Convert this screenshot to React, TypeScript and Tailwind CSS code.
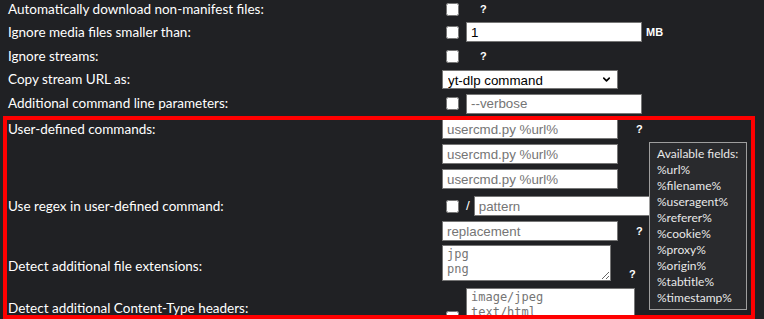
import { ChevronDown } from 'lucide-react'

const input =
  "h-[20px] w-[176px] border border-[#767676] bg-white px-[4px] font-['Liberation_Sans',Arial,sans-serif] text-[13.33px] text-black outline-none placeholder:text-[#757575]"
const area =
  "h-[36px] w-[169px] resize border border-[#767676] bg-white px-[4px] py-[1px] font-['DejaVu_Sans_Mono',monospace] text-[12px] leading-[15px] text-black outline-none placeholder:text-[#757575]"
const check = 'm-0 h-[13px] w-[13px] shrink-0'

function Help({ className = '' }: { className?: string }) {
  return (
    <span className={"font-['Liberation_Sans',Arial,sans-serif] text-[11px] leading-none font-bold text-white " + className}>
      ?
    </span>
  )
}

const fields = [
  'Available fields:',
  '%url%',
  '%filename%',
  '%useragent%',
  '%referer%',
  '%cookie%',
  '%proxy%',
  '%origin%',
  '%tabtitle%',
  '%timestamp%',
]

export default function App() {
  return (
    <div className="h-[319px] overflow-hidden bg-[#202124] font-['Lato',sans-serif] text-[13.5px] text-white">
      <div className="pl-2">
        <div className="flex h-[19px] items-center">
          <div className="w-[434px] shrink-0">Automatically download non-manifest files:</div>
          <div className="flex items-center">
            <input type="checkbox" className={check + ' ml-[4px]'} />
            <Help className="ml-[21px]" />
          </div>
        </div>
        <div className="flex h-[26px] items-center">
          <div className="w-[434px] shrink-0">Ignore media files smaller than:</div>
          <div className="flex items-center">
            <input type="checkbox" className={check + ' ml-[4px]'} />
            <input className={input + ' ml-[7px]'} defaultValue="1" />
            <span className="ml-[4px] font-['Liberation_Sans',Arial,sans-serif] text-[11px] font-bold">MB</span>
          </div>
        </div>
        <div className="flex h-[23px] items-center">
          <div className="w-[434px] shrink-0">Ignore streams:</div>
          <div className="flex items-center">
            <input type="checkbox" className={check + ' ml-[4px]'} />
            <Help className="ml-[21px]" />
          </div>
        </div>
        <div className="flex h-[23px] items-center">
          <div className="w-[434px] shrink-0">Copy stream URL as:</div>
          <div className="relative flex h-[19px] w-[176px] items-center border border-[#767676] bg-white">
            <select className="h-full w-full appearance-none bg-transparent pl-[5px] font-['Liberation_Sans',Arial,sans-serif] text-[13.33px] text-black outline-none">
              <option>yt-dlp command</option>
            </select>
            <ChevronDown className="pointer-events-none absolute right-[5px] h-[11px] w-[11px] text-black" strokeWidth={3.5} />
          </div>
        </div>
        <div className="flex h-[25px] items-center">
          <div className="w-[434px] shrink-0">Additional command line parameters:</div>
          <div className="flex items-center">
            <input type="checkbox" className={check + ' ml-[4px]'} />
            <input className={input + ' ml-[7px]'} placeholder="--verbose" />
          </div>
        </div>
      </div>

      <div className="relative ml-[3px] h-[203px] w-[752px] overflow-hidden border-4 border-[#ff0000] pl-px">
        <div className="-mt-px flex items-start">
          <div className="flex h-[20px] w-[434px] shrink-0 items-center">User-defined commands:</div>
          <div className="flex flex-col gap-[5px]">
            <input className={input} placeholder="usercmd.py %url%" />
            <input className={input} placeholder="usercmd.py %url%" />
            <input className={input} placeholder="usercmd.py %url%" />
          </div>
          <div className="flex h-[20px] items-center">
            <Help className="ml-[18px]" />
          </div>
        </div>

        <div className="mt-[7px] flex h-[20px] items-center">
          <div className="w-[434px] shrink-0">Use regex in user-defined command:</div>
          <input type="checkbox" className={check + ' ml-[4px]'} />
          <span className="ml-[7px] font-['Liberation_Sans',Arial,sans-serif]">/</span>
          <input className={input + ' ml-[4px]'} placeholder="pattern" />
        </div>
        <div className="mt-[5px] flex h-[20px] items-center">
          <div className="w-[434px] shrink-0" />
          <input className={input} placeholder="replacement" />
          <Help className="ml-[18px]" />
        </div>

        <div className="mt-[4px] flex h-[43px]">
          <div className="w-[434px] shrink-0 self-center">Detect additional file extensions:</div>
          <div className="flex items-end self-start">
            <textarea className={area} placeholder={'jpg\npng'} />
            <Help className="mb-[1px] ml-[18px]" />
          </div>
        </div>

        <div className="flex h-[40px]">
          <div className="w-[434px] shrink-0 self-center">Detect additional Content-Type headers:</div>
          <div className="flex items-start">
            <input type="checkbox" className={check + ' mt-[23px] ml-[4px]'} />
            <textarea className={area + ' ml-[7px]'} placeholder={'image/jpeg\ntext/html'} />
          </div>
        </div>

        <div className="absolute top-[22px] left-[642px] h-[168px] w-[98px] border border-[#9e9e9e] bg-[#292a2d] px-[7px] py-[3px] text-[12px] leading-[16px] whitespace-nowrap text-[#e8e8e8]">
          {fields.map((f) => (
            <div key={f}>{f}</div>
          ))}
        </div>
      </div>
    </div>
  )
}
